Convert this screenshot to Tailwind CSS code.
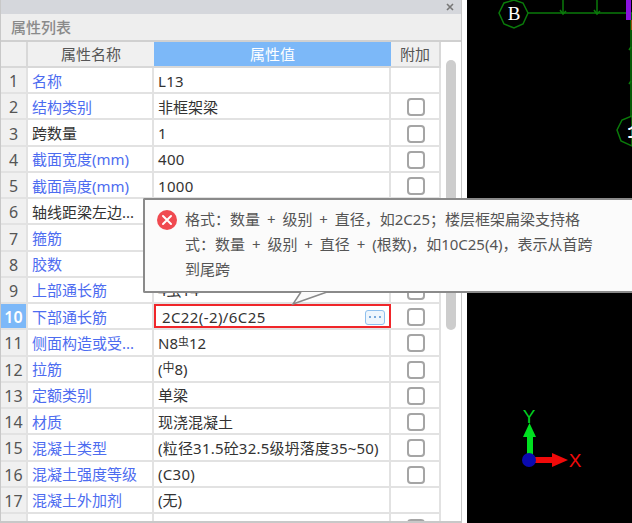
<!DOCTYPE html>
<html lang="zh">
  <head>
    <meta charset="UTF-8" />
    <title>属性列表</title>
    <script src="https://cdn.jsdelivr.net/npm/@tailwindcss/browser@4"></script>
  </head>
  <body class="bg-black">
    <div class="relative flex h-[523px] w-[632px] overflow-hidden font-['Noto_Sans','Noto_Sans_CJK_SC','Liberation_Sans',sans-serif] text-[15px] text-[#333]">

      <!-- Property panel -->
      <div class="flex h-full w-[467px] shrink-0 flex-col overflow-hidden border-r-[5px] border-white">
        <div class="flex h-full w-[462px] flex-col overflow-hidden border-x border-b-2 border-[#c8c8c8] bg-white">
          <div class="flex h-[14px] shrink-0 items-center justify-end bg-[#d5d7dc] pr-[7px]">
            <svg width="8" height="8" viewBox="0 0 8 8"><path d="M1 1L7 7M7 1L1 7" stroke="#777" stroke-width="1.6"/></svg>
          </div>
          <div class="flex h-[28px] shrink-0 items-center border-b-2 border-[#d0d0d0] bg-[#eee] pl-[10px] leading-none font-medium text-[#8a8a8a]">属性列表</div>

          <div class="relative flex min-h-0 flex-1">
            <div class="w-[440px] shrink-0">
              <!-- Header -->
              <div class="flex h-[26px] border-b-2 border-[#d8d8d8] leading-none">
                <div class="w-[27px] shrink-0 border-r-2 border-[#d8d8d8] bg-[#f0f0f0]"></div>
                <div class="flex w-[126px] shrink-0 items-center justify-center bg-[#f0f0f0] text-[#555]">属性名称</div>
                <div class="flex w-[237px] shrink-0 items-center justify-center bg-[#7cb8f8] text-white">属性值</div>
                <div class="flex w-[50px] shrink-0 items-center justify-center border-r-2 border-[#d8d8d8] bg-[#f0f0f0] text-[#555]">附加</div>
              </div>

              <!-- Rows -->
              <div class="[&>div>div]:pt-[2px]">
                <div class="flex h-[26.24px] border-b-2 border-[#e2e2e2] leading-none">
                  <div class="flex w-[27px] shrink-0 items-center justify-center border-r-2 border-[#e2e2e2] bg-[#f0f0f0] text-[16px] text-[#555]">1</div>
                  <div class="flex w-[126px] shrink-0 items-center border-r-2 border-[#e2e2e2] pl-[4px] text-[#4d6cf0]">名称</div>
                  <div class="flex w-[237px] shrink-0 items-center border-r-2 border-[#e2e2e2] pl-[4px] tracking-[0.3px]">L13</div>
                  <div class="w-[50px] shrink-0 border-r-2 border-[#e2e2e2]"></div>
                </div>
                <div class="flex h-[26.24px] border-b-2 border-[#e2e2e2] leading-none">
                  <div class="flex w-[27px] shrink-0 items-center justify-center border-r-2 border-[#e2e2e2] bg-[#f0f0f0] text-[16px] text-[#555]">2</div>
                  <div class="flex w-[126px] shrink-0 items-center border-r-2 border-[#e2e2e2] pl-[4px] text-[#4d6cf0]">结构类别</div>
                  <div class="flex w-[237px] shrink-0 items-center border-r-2 border-[#e2e2e2] pl-[4px]">非框架梁</div>
                  <div class="flex w-[50px] shrink-0 items-center justify-center border-r-2 border-[#e2e2e2] pl-[1px]"><span class="size-[18px] rounded-[4px] border-2 border-[#a5a5a5]"></span></div>
                </div>
                <div class="flex h-[26.24px] border-b-2 border-[#e2e2e2] leading-none">
                  <div class="flex w-[27px] shrink-0 items-center justify-center border-r-2 border-[#e2e2e2] bg-[#f0f0f0] text-[16px] text-[#555]">3</div>
                  <div class="flex w-[126px] shrink-0 items-center border-r-2 border-[#e2e2e2] pl-[4px]">跨数量</div>
                  <div class="flex w-[237px] shrink-0 items-center border-r-2 border-[#e2e2e2] pl-[4px]">1</div>
                  <div class="flex w-[50px] shrink-0 items-center justify-center border-r-2 border-[#e2e2e2] pl-[1px]"><span class="size-[18px] rounded-[4px] border-2 border-[#a5a5a5]"></span></div>
                </div>
                <div class="flex h-[26.24px] border-b-2 border-[#e2e2e2] leading-none">
                  <div class="flex w-[27px] shrink-0 items-center justify-center border-r-2 border-[#e2e2e2] bg-[#f0f0f0] text-[16px] text-[#555]">4</div>
                  <div class="flex w-[126px] shrink-0 items-center border-r-2 border-[#e2e2e2] pl-[4px] text-[#4d6cf0]">截面宽度(mm)</div>
                  <div class="flex w-[237px] shrink-0 items-center border-r-2 border-[#e2e2e2] pl-[4px] tracking-[0.3px]">400</div>
                  <div class="flex w-[50px] shrink-0 items-center justify-center border-r-2 border-[#e2e2e2] pl-[1px]"><span class="size-[18px] rounded-[4px] border-2 border-[#a5a5a5]"></span></div>
                </div>
                <div class="flex h-[26.24px] border-b-2 border-[#e2e2e2] leading-none">
                  <div class="flex w-[27px] shrink-0 items-center justify-center border-r-2 border-[#e2e2e2] bg-[#f0f0f0] text-[16px] text-[#555]">5</div>
                  <div class="flex w-[126px] shrink-0 items-center border-r-2 border-[#e2e2e2] pl-[4px] text-[#4d6cf0]">截面高度(mm)</div>
                  <div class="flex w-[237px] shrink-0 items-center border-r-2 border-[#e2e2e2] pl-[4px] tracking-[0.3px]">1000</div>
                  <div class="flex w-[50px] shrink-0 items-center justify-center border-r-2 border-[#e2e2e2] pl-[1px]"><span class="size-[18px] rounded-[4px] border-2 border-[#a5a5a5]"></span></div>
                </div>
                <div class="flex h-[26.24px] border-b-2 border-[#e2e2e2] leading-none">
                  <div class="flex w-[27px] shrink-0 items-center justify-center border-r-2 border-[#e2e2e2] bg-[#f0f0f0] text-[16px] text-[#555]">6</div>
                  <div class="flex w-[126px] shrink-0 items-center border-r-2 border-[#e2e2e2] pl-[4px]">轴线距梁左边...</div>
                  <div class="w-[237px] shrink-0 border-r-2 border-[#e2e2e2]"></div>
                  <div class="w-[50px] shrink-0 border-r-2 border-[#e2e2e2]"></div>
                </div>
                <div class="flex h-[26.24px] border-b-2 border-[#e2e2e2] leading-none">
                  <div class="flex w-[27px] shrink-0 items-center justify-center border-r-2 border-[#e2e2e2] bg-[#f0f0f0] text-[16px] text-[#555]">7</div>
                  <div class="flex w-[126px] shrink-0 items-center border-r-2 border-[#e2e2e2] pl-[4px] text-[#4d6cf0]">箍筋</div>
                  <div class="w-[237px] shrink-0 border-r-2 border-[#e2e2e2]"></div>
                  <div class="w-[50px] shrink-0 border-r-2 border-[#e2e2e2]"></div>
                </div>
                <div class="flex h-[26.24px] border-b-2 border-[#e2e2e2] leading-none">
                  <div class="flex w-[27px] shrink-0 items-center justify-center border-r-2 border-[#e2e2e2] bg-[#f0f0f0] text-[16px] text-[#555]">8</div>
                  <div class="flex w-[126px] shrink-0 items-center border-r-2 border-[#e2e2e2] pl-[4px] text-[#4d6cf0]">胶数</div>
                  <div class="w-[237px] shrink-0 border-r-2 border-[#e2e2e2]"></div>
                  <div class="w-[50px] shrink-0 border-r-2 border-[#e2e2e2]"></div>
                </div>
                <div class="flex h-[26.24px] border-b-2 border-[#e2e2e2] leading-none">
                  <div class="flex w-[27px] shrink-0 items-center justify-center border-r-2 border-[#e2e2e2] bg-[#f0f0f0] text-[16px] text-[#555]">9</div>
                  <div class="flex w-[126px] shrink-0 items-center border-r-2 border-[#e2e2e2] pl-[4px] text-[#4d6cf0]">上部通长筋</div>
                  <div class="flex w-[237px] shrink-0 items-center border-r-2 border-[#e2e2e2] pl-[4px]">4虫14</div>
                  <div class="flex w-[50px] shrink-0 items-center justify-center border-r-2 border-[#e2e2e2] pl-[1px]"><span class="size-[18px] rounded-[4px] border-2 border-[#a5a5a5]"></span></div>
                </div>
                <div class="flex h-[26.24px] border-b-2 border-[#e2e2e2] leading-none">
                  <div class="flex w-[27px] shrink-0 items-center justify-center border-r-2 border-[#e2e2e2] bg-[#7cb8f8] text-[16px] font-semibold text-white">10</div>
                  <div class="flex w-[126px] shrink-0 items-center border-r-2 border-[#e2e2e2] pl-[4px] text-[#4d6cf0]">下部通长筋</div>
                  <div class="flex w-[237px] shrink-0 items-center justify-between border-2 border-[#f0262a] pr-[4px] pl-[6px] tracking-[0.4px]">
                    2C22(-2)/6C25
                    <span class="flex h-[15px] w-[20px] items-center justify-center gap-[3px] rounded-[3px] border border-[#8fc0ee] bg-[#eef6fd]">
                      <span class="size-[2px] rounded-full bg-[#4f8fd0]"></span>
                      <span class="size-[2px] rounded-full bg-[#4f8fd0]"></span>
                      <span class="size-[2px] rounded-full bg-[#4f8fd0]"></span>
                    </span>
                  </div>
                  <div class="flex w-[50px] shrink-0 items-center justify-center border-r-2 border-[#e2e2e2] pl-[1px]"><span class="size-[18px] rounded-[4px] border-2 border-[#a5a5a5]"></span></div>
                </div>
                <div class="flex h-[26.24px] border-b-2 border-[#e2e2e2] leading-none">
                  <div class="flex w-[27px] shrink-0 items-center justify-center border-r-2 border-[#e2e2e2] bg-[#f0f0f0] text-[16px] text-[#555]">11</div>
                  <div class="flex w-[126px] shrink-0 items-center border-r-2 border-[#e2e2e2] pl-[4px] text-[#4d6cf0]">侧面构造或受...</div>
                  <div class="flex w-[237px] shrink-0 items-center border-r-2 border-[#e2e2e2] pl-[4px]">N8<span class="mb-[3px] text-[11px]">虫</span>12</div>
                  <div class="flex w-[50px] shrink-0 items-center justify-center border-r-2 border-[#e2e2e2] pl-[1px]"><span class="size-[18px] rounded-[4px] border-2 border-[#a5a5a5]"></span></div>
                </div>
                <div class="flex h-[26.24px] border-b-2 border-[#e2e2e2] leading-none">
                  <div class="flex w-[27px] shrink-0 items-center justify-center border-r-2 border-[#e2e2e2] bg-[#f0f0f0] text-[16px] text-[#555]">12</div>
                  <div class="flex w-[126px] shrink-0 items-center border-r-2 border-[#e2e2e2] pl-[4px] text-[#4d6cf0]">拉筋</div>
                  <div class="flex w-[237px] shrink-0 items-center border-r-2 border-[#e2e2e2] pl-[4px]">(<span class="mb-[3px] text-[12px]">中</span>8)</div>
                  <div class="flex w-[50px] shrink-0 items-center justify-center border-r-2 border-[#e2e2e2] pl-[1px]"><span class="size-[18px] rounded-[4px] border-2 border-[#a5a5a5]"></span></div>
                </div>
                <div class="flex h-[26.24px] border-b-2 border-[#e2e2e2] leading-none">
                  <div class="flex w-[27px] shrink-0 items-center justify-center border-r-2 border-[#e2e2e2] bg-[#f0f0f0] text-[16px] text-[#555]">13</div>
                  <div class="flex w-[126px] shrink-0 items-center border-r-2 border-[#e2e2e2] pl-[4px] text-[#4d6cf0]">定额类别</div>
                  <div class="flex w-[237px] shrink-0 items-center border-r-2 border-[#e2e2e2] pl-[4px]">单梁</div>
                  <div class="flex w-[50px] shrink-0 items-center justify-center border-r-2 border-[#e2e2e2] pl-[1px]"><span class="size-[18px] rounded-[4px] border-2 border-[#a5a5a5]"></span></div>
                </div>
                <div class="flex h-[26.24px] border-b-2 border-[#e2e2e2] leading-none">
                  <div class="flex w-[27px] shrink-0 items-center justify-center border-r-2 border-[#e2e2e2] bg-[#f0f0f0] text-[16px] text-[#555]">14</div>
                  <div class="flex w-[126px] shrink-0 items-center border-r-2 border-[#e2e2e2] pl-[4px] text-[#4d6cf0]">材质</div>
                  <div class="flex w-[237px] shrink-0 items-center border-r-2 border-[#e2e2e2] pl-[4px]">现浇混凝土</div>
                  <div class="flex w-[50px] shrink-0 items-center justify-center border-r-2 border-[#e2e2e2] pl-[1px]"><span class="size-[18px] rounded-[4px] border-2 border-[#a5a5a5]"></span></div>
                </div>
                <div class="flex h-[26.24px] border-b-2 border-[#e2e2e2] leading-none">
                  <div class="flex w-[27px] shrink-0 items-center justify-center border-r-2 border-[#e2e2e2] bg-[#f0f0f0] text-[16px] text-[#555]">15</div>
                  <div class="flex w-[126px] shrink-0 items-center border-r-2 border-[#e2e2e2] pl-[4px] text-[#4d6cf0]">混凝土类型</div>
                  <div class="flex w-[237px] shrink-0 items-center border-r-2 border-[#e2e2e2] pl-[4px] tracking-[0.2px] whitespace-nowrap">(粒径31.5砼32.5级坍落度35~50)</div>
                  <div class="flex w-[50px] shrink-0 items-center justify-center border-r-2 border-[#e2e2e2] pl-[1px]"><span class="size-[18px] rounded-[4px] border-2 border-[#a5a5a5]"></span></div>
                </div>
                <div class="flex h-[26.24px] border-b-2 border-[#e2e2e2] leading-none">
                  <div class="flex w-[27px] shrink-0 items-center justify-center border-r-2 border-[#e2e2e2] bg-[#f0f0f0] text-[16px] text-[#555]">16</div>
                  <div class="flex w-[126px] shrink-0 items-center border-r-2 border-[#e2e2e2] pl-[4px] text-[#4d6cf0]">混凝土强度等级</div>
                  <div class="flex w-[237px] shrink-0 items-center border-r-2 border-[#e2e2e2] pl-[4px] tracking-[0.3px]">(C30)</div>
                  <div class="flex w-[50px] shrink-0 items-center justify-center border-r-2 border-[#e2e2e2] pl-[1px]"><span class="size-[18px] rounded-[4px] border-2 border-[#a5a5a5]"></span></div>
                </div>
                <div class="flex h-[26.24px] border-b-2 border-[#e2e2e2] leading-none">
                  <div class="flex w-[27px] shrink-0 items-center justify-center border-r-2 border-[#e2e2e2] bg-[#f0f0f0] text-[16px] text-[#555]">17</div>
                  <div class="flex w-[126px] shrink-0 items-center border-r-2 border-[#e2e2e2] pl-[4px] text-[#4d6cf0]">混凝土外加剂</div>
                  <div class="flex w-[237px] shrink-0 items-center border-r-2 border-[#e2e2e2] pl-[4px]">(无)</div>
                  <div class="w-[50px] shrink-0 border-r-2 border-[#e2e2e2]"></div>
                </div>
                <div class="flex h-[26.24px] leading-none">
                  <div class="w-[27px] shrink-0 border-r-2 border-[#e2e2e2] bg-[#f0f0f0]"></div>
                  <div class="w-[126px] shrink-0 border-r-2 border-[#e2e2e2]"></div>
                  <div class="w-[237px] shrink-0 border-r-2 border-[#e2e2e2]"></div>
                  <div class="flex w-[50px] shrink-0 items-center justify-center border-r-2 border-[#e2e2e2] pl-[1px]"><span class="size-[18px] rounded-[4px] border-2 border-[#a5a5a5]"></span></div>
                </div>
              </div>
            </div>

            <!-- Scrollbar -->
            <div class="flex flex-1 justify-center pt-[18px]">
              <div class="h-[270px] w-[10px] rounded-full bg-[#cdcdcd]"></div>
            </div>
          </div>
        </div>
      </div>

      <!-- CAD view -->
      <svg class="absolute top-0 left-[467px]" width="165" height="523" viewBox="467 0 165 523">
        <path d="M528 13H632M563 0V13M597 0V13M631 13V116" fill="none" stroke="#0a7a0a" stroke-width="1.5"/>
        <path d="M560 10L563 14L566 11M594 10L597 14L600 11M629 50L631 47M629 84L631 81" fill="none" stroke="#0a7a0a" stroke-width="1.5"/>
        <polygon points="514,0 523,3 528,13 523,24 514,28 504,24 499,13 504,3" fill="black" stroke="#0a7a0a" stroke-width="1.5"/>
        <text x="514" y="20" text-anchor="middle" fill="white" font-size="19" font-family="Liberation Serif">B</text>
        <polygon points="632,116 622,120 617,130 621,141 632,146" fill="black" stroke="#0a7a0a" stroke-width="1.5"/>
        <text x="627" y="138" fill="white" font-size="19" font-weight="bold" font-family="Liberation Mono">1</text>
        <rect x="626" y="0" width="5" height="20" fill="#8a12e0"/>
        <rect x="631" y="20" width="1" height="10" fill="#a05010"/>
        <!-- Axis gizmo -->
        <polygon points="527,456 527,437 523,437 529.5,423 536,437 533,437 533,456" fill="#00e020"/>
        <polygon points="535,457 552,457 552,453 568,460 552,467 552,463 535,463" fill="#f00a0a"/>
        <circle cx="529" cy="460" r="7" fill="#0a0ab0"/>
        <text x="529" y="423" text-anchor="middle" fill="#00d020" font-size="19" font-family="Liberation Sans">Y</text>
        <text x="575" y="467" text-anchor="middle" fill="#f00a0a" font-size="19" font-family="Liberation Sans">X</text>
      </svg>

      <!-- Error tooltip -->
      <div class="absolute top-[198px] left-[143px] flex h-[95px] w-[489px] gap-[8px] rounded-l-[2px] border-2 border-r-0 border-[#8a8a8a] bg-[#fbfbfb] pt-[7px] pl-[12px] leading-[25px] [word-spacing:3px] text-[#555]">
        <svg class="mt-[3px] shrink-0" width="20" height="20" viewBox="0 0 20 20">
          <circle cx="10" cy="10" r="10" fill="#f04a50"/>
          <path d="M6 6L14 14M14 6L6 14" stroke="white" stroke-width="2" stroke-linecap="round"/>
        </svg>
        <p class="whitespace-nowrap">格式：数量 + 级别 + 直径，如2C25；楼层框架扁梁支持格<br />式：数量 + 级别 + 直径 + (根数)，如10C25(4)，表示从首跨<br />到尾跨</p>
      </div>
      <svg class="absolute top-[291px] left-[290px]" width="40" height="16" viewBox="0 0 40 16">
        <polygon points="11,1 3,13 37,1" fill="#fbfbfb"/>
        <path d="M11 1L3 13L37 1" fill="none" stroke="#8a8a8a" stroke-width="1.5"/>
      </svg>
    </div>
  </body>
</html>
